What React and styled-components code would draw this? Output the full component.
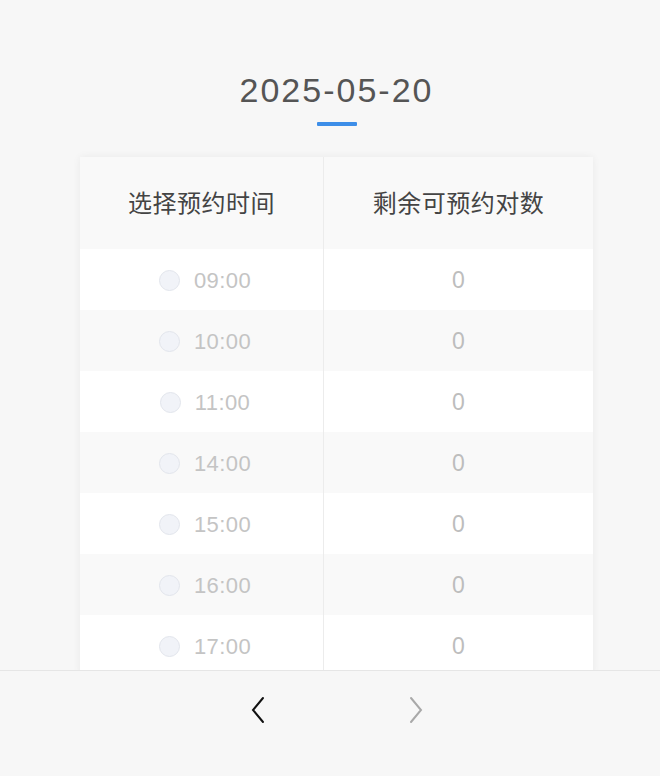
import React from "react";
import styled, { createGlobalStyle } from "styled-components";

const Global = createGlobalStyle`
  html, body { margin: 0; padding: 0; background: #f7f7f7; }
  body { font-family: "Liberation Sans", "Noto Sans CJK SC", sans-serif; }
`;

const Page = styled.div`
  min-height: 776px;
  background: #f7f7f7;
  display: flex;
  flex-direction: column;
  align-items: center;
  padding-top: 70px;
  padding-left: 13px;
  box-sizing: border-box;
`;

const DateTitle = styled.div`
  font-size: 34px;
  color: #555555;
  letter-spacing: 2px;
  line-height: 40px;
`;

const Underline = styled.div`
  width: 40px;
  height: 4px;
  background: #3d8ee8;
  margin-top: 12px;
  border-radius: 1px;
`;

const Card = styled.div`
  margin-top: 31px;
  width: 513px;
  background: #ffffff;
  box-shadow: 0 0 8px rgba(0, 0, 0, 0.06);
`;

const Row = styled.div`
  display: grid;
  grid-template-columns: 243px 1px 1fr;
  height: ${(p) => (p.$header ? 92 : 61)}px;
  background: ${(p) => (p.$shade ? "#f9f9f9" : "#ffffff")};
`;

const Divider = styled.div`
  background: #ececec;
`;

const Cell = styled.div`
  display: flex;
  align-items: center;
  justify-content: center;
  gap: 14px;
  padding-left: ${(p) => (p.$offset ? 7 : 0)}px;
  padding-bottom: ${(p) => (p.$lift ? 3 : 0)}px;
  padding-top: ${(p) => (p.$lift ? 0 : 2)}px;
`;

const HeadText = styled.span`
  font-family: "Noto Sans CJK SC", sans-serif;
  font-size: 24px;
  color: #444444;
  letter-spacing: 0.5px;
`;

const Radio = styled.span`
  width: 21px;
  height: 21px;
  border-radius: 50%;
  background: #f1f3f8;
  border: 1px solid #e2e5ec;
  box-sizing: border-box;
`;

const Time = styled.span`
  font-size: 22px;
  color: #c4c4c4;
  letter-spacing: 0.4px;
`;

const Count = styled.span`
  font-size: 23px;
  color: #bdbdbd;
`;

const Footer = styled.div`
  position: fixed;
  left: 0;
  right: 0;
  bottom: 0;
  height: 106px;
  background: #f7f7f7;
  border-top: 1px solid #e6e6e6;
  display: flex;
  justify-content: center;
  align-items: flex-start;
  padding-top: 24px;
  padding-left: 13px;
  box-sizing: border-box;
  gap: 130px;
`;

const NavButton = styled.button`
  background: none;
  border: none;
  padding: 0;
  width: 28px;
  height: 30px;
  display: flex;
  align-items: center;
  justify-content: center;
  color: ${(p) => (p.$disabled ? "#a9a9a9" : "#111111")};
`;

const times = ["09:00", "10:00", "11:00", "14:00", "15:00", "16:00", "17:00"];

const Chevron = ({ dir }) => (
  <svg width="14" height="28" viewBox="0 0 14 28" fill="none">
    <path
      d={dir === "left" ? "M12 2 L2 14 L12 26" : "M2 2 L12 14 L2 26"}
      stroke="currentColor"
      strokeWidth="2"
      strokeLinecap="round"
      strokeLinejoin="miter"
    />
  </svg>
);

export default function App() {
  return (
    <>
      <Global />
      <Page>
        <DateTitle>2025-05-20</DateTitle>
        <Underline />
        <Card>
          <Row $header $shade>
            <Cell $lift>
              <HeadText>选择预约时间</HeadText>
            </Cell>
            <Divider />
            <Cell $lift>
              <HeadText>剩余可预约对数</HeadText>
            </Cell>
          </Row>
          {times.map((t, i) => (
            <Row key={t} $shade={i % 2 === 1}>
              <Cell $offset>
                <Radio />
                <Time>{t}</Time>
              </Cell>
              <Divider />
              <Cell>
                <Count>0</Count>
              </Cell>
            </Row>
          ))}
        </Card>
      </Page>
      <Footer>
        <NavButton aria-label="previous">
          <Chevron dir="left" />
        </NavButton>
        <NavButton $disabled aria-label="next">
          <Chevron dir="right" />
        </NavButton>
      </Footer>
    </>
  );
}
